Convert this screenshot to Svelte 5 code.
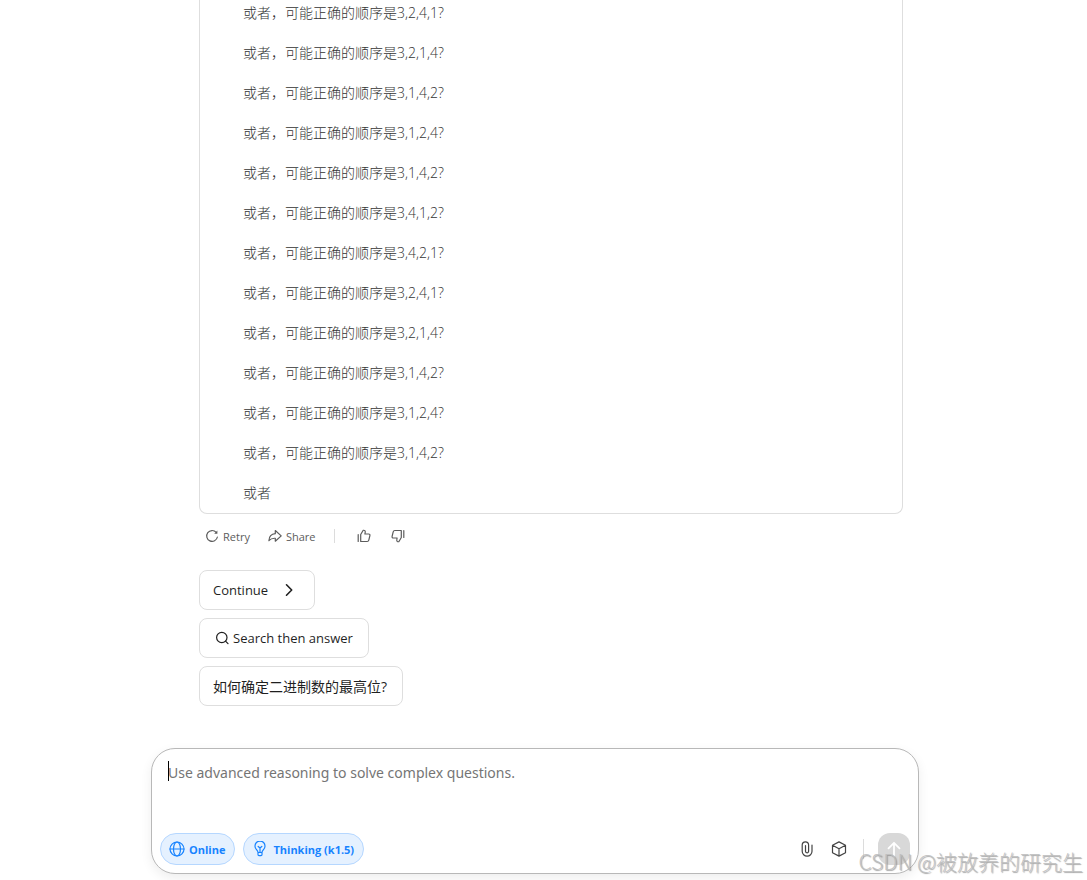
<script lang="ts">
  const orders = [
    '3,2,4,1',
    '3,2,1,4',
    '3,1,4,2',
    '3,1,2,4',
    '3,1,4,2',
    '3,4,1,2',
    '3,4,2,1',
    '3,2,4,1',
    '3,2,1,4',
    '3,1,4,2',
    '3,1,2,4',
    '3,1,4,2'
  ];

  let message = $state('');
</script>

<div class="page">
  <main class="column">
    <div class="reply">
      <article class="thinking">
        {#each orders as order}
          <p>或者，可能正确的顺序是{order}?</p>
        {/each}
        <p>或者</p>
      </article>

      <div class="actions">
        <button class="action">
          <svg width="14" height="14" viewBox="0 0 14 14">
            <path d="M11.2 3.400A5.400 5.400 0 1 0 12.400 8" />
            <path class="solid" d="M12.400 1.600v3.200H9.200Z" />
          </svg>
          Retry
        </button>
        <button class="action share">
          <svg width="14" height="14" viewBox="0 0 14 14">
            <path d="M7.300 1.500 13.200 6.900l-5.900 5.300V9.300C4.400 9.100 2.600 9.700.9 11.700 1.100 7.800 3.500 5 7.300 4.700Z" />
          </svg>
          Share
        </button>
        <span class="divider"></span>
        <button class="action vote" aria-label="Like">
          <svg width="14" height="14" viewBox="0 0 14 14">
            <path d="M1.200 5.500v7M3.700 5.500 6.200 1.300c1.400-.3 2.300.6 2 2L7.900 5h3.700c1 0 1.500.7 1.300 1.600l-1.100 4.600c-.2.800-.7 1.300-1.600 1.300H3.700Z" />
          </svg>
        </button>
        <button class="action vote" aria-label="Dislike">
          <svg width="14" height="14" viewBox="0 0 14 14">
            <path d="M12.800 8.500v-7M10.300 8.500 7.800 12.700c-1.400.3-2.300-.6-2-2L6.100 9H2.400c-1 0-1.500-.7-1.300-1.600l1.100-4.600c.2-.8.700-1.300 1.600-1.300h6.500Z" />
          </svg>
        </button>
      </div>

      <div class="suggestions">
        <button class="suggestion">
          Continue
          <svg class="chevron" width="16" height="16" viewBox="0 0 16 16">
            <path d="m5.500 2.800 5.200 5.200-5.200 5.200" />
          </svg>
        </button>
        <button class="suggestion search">
          <svg width="14" height="14" viewBox="0 0 14 14">
            <circle cx="6.800" cy="6.500" r="5.200" />
            <path d="m10.500 10.200 2.500 2.500" />
          </svg>
          Search then answer
        </button>
        <button class="suggestion question">如何确定二进制数的最高位?</button>
      </div>
    </div>

    <form class="composer">
      <div class="field">
        <textarea
          bind:value={message}
          aria-label="Message"
          placeholder="Use advanced reasoning to solve complex questions."
        ></textarea>
        <span class="caret"></span>
      </div>
      <div class="toolbar">
        <button type="button" class="pill">
          <svg width="16" height="16" viewBox="0 0 16 16">
            <circle cx="8" cy="8" r="7" />
            <ellipse cx="8" cy="8" rx="3.500" ry="7" />
            <path d="M1 8h14" />
          </svg>
          Online
        </button>
        <button type="button" class="pill thinking-mode">
          <svg width="16" height="16" viewBox="0 0 16 16">
            <path d="M6 11.500c0-1.300-.6-1.900-1.400-2.800a5 5 0 1 1 6.800 0c-.8.900-1.400 1.500-1.400 2.800ZM6 11.500v2c0 .8.400 1.200 1 1.200h2c.6 0 1-.4 1-1.200v-2M6.200 5.500 8 7l1.800-1.500M8 7v4.500" />
          </svg>
          Thinking (k1.5)
        </button>
        <span class="spacer"></span>
        <button type="button" class="tool" aria-label="Attach file">
          <svg width="16" height="16" viewBox="0 0 16 16">
            <path d="M13 4v6.300a4.900 4.900 0 0 1-9.800 0V4a3.200 3.200 0 0 1 6.400 0v6.300a1.550 1.550 0 0 1-3.100 0V4.500" />
          </svg>
        </button>
        <button type="button" class="tool" aria-label="Toolbox">
          <svg width="16" height="16" viewBox="0 0 16 16">
            <path d="M8 .9 14.500 4.300v7.400L8 15.100l-6.500-3.400V4.300ZM1.500 4.300 8 7.800l6.500-3.500M8 7.800v7.300" />
          </svg>
        </button>
        <span class="divider"></span>
        <button class="send" aria-label="Send">
          <svg width="16" height="16" viewBox="0 0 16 16">
            <path d="M8 15V2M2.500 7.300 8 1.800l5.500 5.500" />
          </svg>
        </button>
      </div>
    </form>
  </main>
  <span class="watermark">CSDN @被放养的研究生</span>
</div>

<style>
  :global(body) {
    background: #fff;
  }

  .page {
    position: relative;
    min-height: 100vh;
    box-sizing: border-box;
    padding: 0 17px 6px 0;
    font-family: 'Open Sans', 'Noto Sans CJK SC', sans-serif;
    font-size: 14px;
    color: #1f1f1f;
  }

  .column {
    max-width: 768px;
    margin: 0 auto;
  }

  .reply {
    padding: 0 16px 0 48px;
  }

  .thinking {
    padding: 1px 43px 8px;
    border: 1px solid #dedede;
    border-top: none;
    border-radius: 0 0 8px 8px;
    font-weight: 300;
    line-height: 24px;
    color: #333;
  }

  .thinking p {
    margin: 0 0 16px;
  }

  .thinking p:last-child {
    margin-bottom: 0;
  }

  button {
    display: flex;
    align-items: center;
    box-sizing: border-box;
    margin: 0;
    padding: 0;
    border: none;
    background: none;
    color: inherit;
    font: inherit;
    cursor: pointer;
  }

  svg {
    flex: none;
    fill: none;
    stroke: currentColor;
    stroke-width: 1.2;
    stroke-linecap: round;
    stroke-linejoin: round;
  }

  .solid {
    fill: currentColor;
    stroke: none;
  }

  .actions {
    display: flex;
    align-items: center;
    height: 24px;
    margin-top: 10px;
    padding-left: 6px;
    font-size: 11px;
    color: #5c5c5c;
  }

  .action {
    gap: 4px;
  }

  .share {
    margin-left: 18px;
  }

  .divider {
    width: 1px;
    height: 14px;
    background: #dcdcdc;
  }

  .actions .divider {
    margin: 0 2px 0 19px;
  }

  .vote {
    margin-left: 20px;
  }

  .suggestions {
    display: flex;
    flex-direction: column;
    align-items: flex-start;
    gap: 8px;
    margin-top: 22px;
  }

  .suggestion {
    height: 40px;
    padding: 0 15px 0 13px;
    border: 1px solid #dedede;
    border-radius: 8px;
    font-size: 13px;
  }

  .question {
    font-size: 14px;
  }

  .chevron {
    margin: 0 2px 0 13px;
    stroke-width: 1.6;
  }

  .search {
    gap: 4px;
    padding-left: 15px;
  }

  .composer {
    box-sizing: border-box;
    margin-top: 42px;
    padding: 8px;
    border: 1px solid #b8b8b8;
    border-radius: 24px;
    background: #fff;
    box-shadow: 0 4px 12px rgba(0, 0, 0, 0.07);
  }

  .field {
    position: relative;
    height: 76px;
    padding: 4px 8px 0;
    box-sizing: border-box;
  }

  textarea {
    display: block;
    width: 100%;
    height: 60px;
    padding: 0;
    border: none;
    outline: none;
    resize: none;
    background: none;
    font-family: 'Noto Sans', 'Noto Sans CJK SC', sans-serif;
    font-size: 14px;
    line-height: 24px;
    color: #1f1f1f;
  }

  textarea::placeholder {
    color: #757575;
    opacity: 1;
  }

  .caret {
    position: absolute;
    top: 4px;
    left: 8px;
    width: 1px;
    height: 20px;
    background: #000;
  }

  .toolbar {
    display: flex;
    align-items: center;
    height: 32px;
  }

  .pill {
    gap: 4px;
    height: 32px;
    padding: 0 9px 0 8px;
    border: 1px solid #b5d7ff;
    border-radius: 16px;
    background: #e5f1ff;
    font-size: 11px;
    font-weight: 700;
    color: #1783ff;
  }

  .thinking-mode {
    gap: 5px;
    margin-left: 8px;
  }

  .spacer {
    flex: 1;
  }

  .tool {
    margin-right: 16px;
    color: #444;
  }

  .send {
    justify-content: center;
    width: 32px;
    height: 32px;
    margin-left: 14px;
    border-radius: 12px;
    background: #d8d8d8;
    color: #fff;
  }

  .toolbar .divider {
    height: 20px;
  }

  .send svg {
    stroke-width: 1.8;
  }

  .watermark {
    position: absolute;
    right: 4px;
    bottom: 4px;
    font-family: 'Noto Sans CJK SC', sans-serif;
    font-size: 21px;
    font-weight: 300;
    line-height: 30px;
    color: rgba(190, 190, 190, 0.9);
    text-shadow: 1px 1px 1px rgba(110, 110, 110, 0.6);
    white-space: nowrap;
    pointer-events: none;
  }
</style>
